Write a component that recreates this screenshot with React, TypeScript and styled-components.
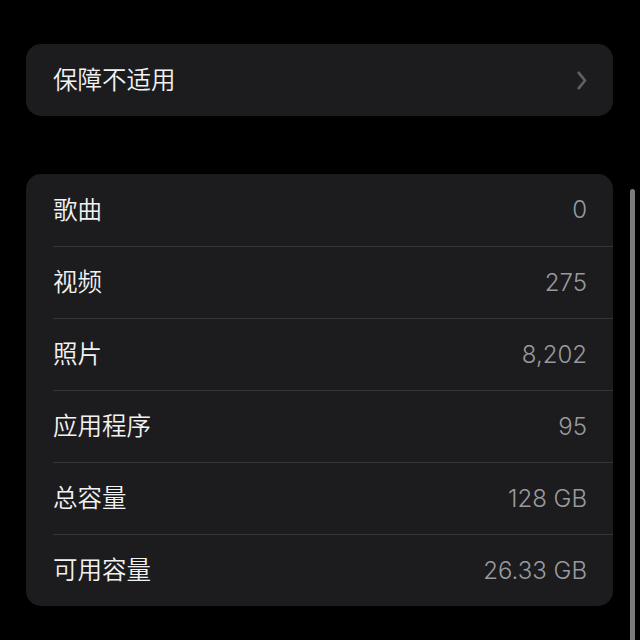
import styled, { createGlobalStyle } from 'styled-components'

const GlobalStyle = createGlobalStyle`
  html, body {
    margin: 0;
    padding: 0;
    background: #000;
  }
  body {
    font-family: "Noto Sans CJK SC", "Noto Sans", sans-serif;
  }
`

const rows = [
  { label: '歌曲', value: '0' },
  { label: '视频', value: '275' },
  { label: '照片', value: '8,202' },
  { label: '应用程序', value: '95' },
  { label: '总容量', value: '128 GB' },
  { label: '可用容量', value: '26.33 GB' },
]

function Chevron() {
  return (
    <svg width="10" height="19" viewBox="0 0 10 19" fill="none">
      <path d="M1.8 1.8 L8 9.5 L1.8 17.2" stroke="#606064" strokeWidth="2.7" strokeLinecap="round" strokeLinejoin="round" />
    </svg>
  )
}

export default function App() {
  return (
    <Page>
      <GlobalStyle />
      <Card>
        <Row>
          <Label>保障不适用</Label>
          <Chevron />
        </Row>
      </Card>
      <Card $gap>
        {rows.map((r) => (
          <Row key={r.label}>
            <Label>{r.label}</Label>
            <Value>{r.value}</Value>
          </Row>
        ))}
      </Card>
      <ScrollBar />
    </Page>
  )
}

const Page = styled.div`
  position: relative;
  width: 640px;
  height: 640px;
  overflow: hidden;
  background: #000;
  padding: 44px 27px 0 26px;
  box-sizing: border-box;
  display: flex;
  flex-direction: column;
`

const Card = styled.div<{ $gap?: boolean }>`
  background: #1c1c1e;
  border-radius: 15px;
  margin-top: ${(p) => (p.$gap ? '58px' : '0')};
  padding-left: 27px;
  overflow: hidden;
`

const Row = styled.div`
  height: 72px;
  display: flex;
  align-items: center;
  justify-content: space-between;
  padding-right: 26px;
  box-sizing: border-box;
  & + & {
    border-top: 1px solid #343436;
  }
`

const Label = styled.span`
  color: #f2f2f2;
  font-size: 24.5px;
  font-weight: 350;
  line-height: 1;
  margin-top: -2px;
`

const Value = styled.span`
  color: #9a9a9e;
  font-family: Inter, "Noto Sans", sans-serif;
  font-size: 24px;
  font-weight: 350;
  line-height: 1;
`

const ScrollBar = styled.div`
  position: absolute;
  left: 630px;
  top: 189px;
  width: 5px;
  height: 460px;
  border-radius: 3px;
  background: #7c7c7e;
`
